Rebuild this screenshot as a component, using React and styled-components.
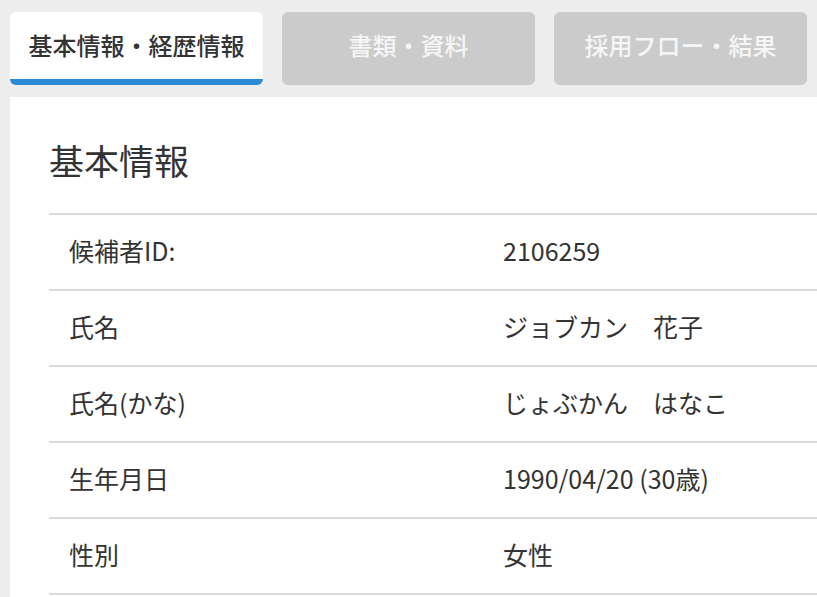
import React from 'react'
import styled, { createGlobalStyle } from 'styled-components'

const GlobalStyle = createGlobalStyle`
  html, body {
    margin: 0;
    padding: 0;
    background: #ededed;
    overflow: hidden;
  }
  body {
    font-family: "Noto Sans CJK JP", "Noto Sans", sans-serif;
    color: #333;
  }
`

const Page = styled.div`
  width: 817px;
  height: 597px;
  padding: 12px 0 0 10px;
  box-sizing: border-box;
  overflow: hidden;
`

const TabRow = styled.div`
  display: flex;
  gap: 19px;
  padding-right: 10px;
`

const Tab = styled.div`
  flex: 1;
  height: 73px;
  box-sizing: border-box;
  display: flex;
  align-items: center;
  justify-content: center;
  border-radius: 6px;
  font-size: 24px;
  font-weight: 500;
  padding-bottom: 2px;
  background: ${p => (p.$active ? '#ffffff' : '#cbcbcb')};
  color: ${p => (p.$active ? '#333333' : '#f6f6f6')};
  border-bottom: 6px solid ${p => (p.$active ? '#2b8ad6' : 'transparent')};
`

const Panel = styled.div`
  margin-top: 12px;
  background: #fff;
  padding: 39px 0 0 39px;
  height: 500px;
`

const Heading = styled.h2`
  margin: 0 0 30px;
  font-size: 35px;
  font-weight: 400;
  line-height: 47px;
  color: #333;
`

const Table = styled.div`
  border-top: 2px solid #dadada;
`

const Row = styled.div`
  display: grid;
  grid-template-columns: 434px 1fr;
  height: 76px;
  box-sizing: border-box;
  align-items: center;
  border-bottom: 2px solid #dadada;
  padding: 0 0 5px 20px;
  font-size: 25px;
`

const Label = styled.div``
const Value = styled.div`
  white-space: pre;
`

const rows = [
  ['候補者ID:', '2106259'],
  ['氏名', 'ジョブカン　花子'],
  ['氏名(かな)', 'じょぶかん　はなこ'],
  ['生年月日', '1990/04/20 (30歳)'],
  ['性別', '女性'],
]

export default function App() {
  return (
    <Page>
      <GlobalStyle />
      <TabRow>
        <Tab $active>基本情報・経歴情報</Tab>
        <Tab>書類・資料</Tab>
        <Tab>採用フロー・結果</Tab>
      </TabRow>
      <Panel>
        <Heading>基本情報</Heading>
        <Table>
          {rows.map(([k, v]) => (
            <Row key={k}>
              <Label>{k}</Label>
              <Value>{v}</Value>
            </Row>
          ))}
        </Table>
      </Panel>
    </Page>
  )
}
